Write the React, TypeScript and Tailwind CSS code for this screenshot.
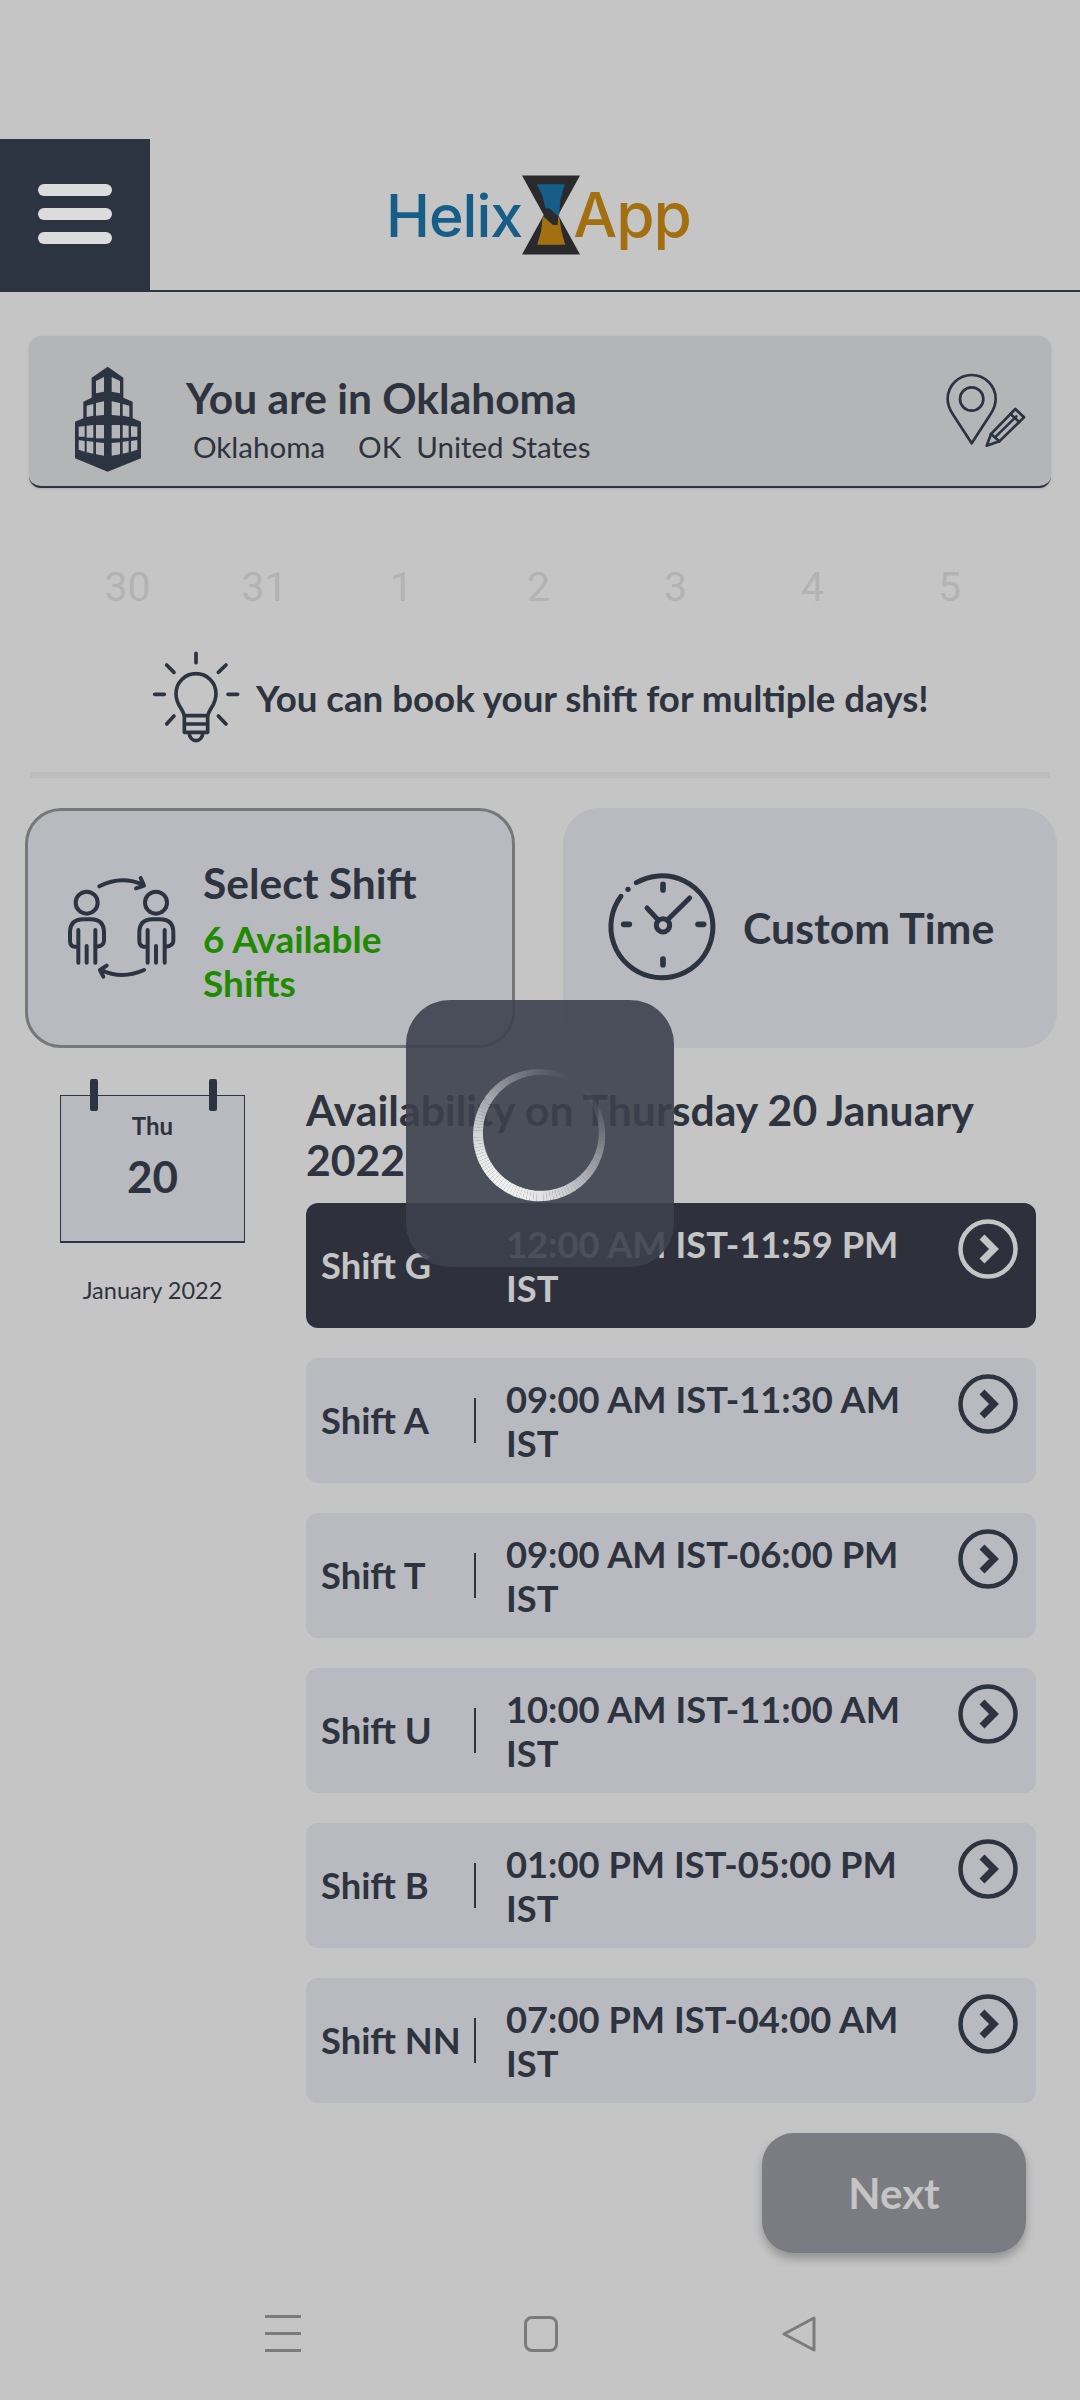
import type { ReactNode } from "react";

const SHIFTS = [
  { name: "Shift G", from: "12:00 AM IST-11:59 PM", active: true },
  { name: "Shift A", from: "09:00 AM IST-11:30 AM" },
  { name: "Shift T", from: "09:00 AM IST-06:00 PM" },
  { name: "Shift U", from: "10:00 AM IST-11:00 AM" },
  { name: "Shift B", from: "01:00 PM IST-05:00 PM" },
  { name: "Shift NN", from: "07:00 PM IST-04:00 AM" },
];

const DAYS = ["30", "31", "1", "2", "3", "4", "5"];

function Hourglass() {
  return (
    <svg width="58" height="80" viewBox="0 0 176 240" className="shrink-0">
      <polygon points="0,0 176,0 110,120 176,240 0,240 66,120" fill="#2a2a2c" />
      <polygon points="45,27 130,27 116,75 113,120 76,120 63,65" fill="#165d88" />
      <polygon points="63,125 113,125 120,170 131,210 46,210 58,170" fill="#a37011" />
      <polygon points="70,100 84,100 110,125 108,150 94,150 66,125" fill="#2a2a2c" />
    </svg>
  );
}

function Building() {
  const win = "#b4b5b7";
  return (
    <svg width="100" height="125" viewBox="0 0 300 375" className="shrink-0">
      <polygon
        points="143,35 190,68 190,128 218,140 218,190 243,200 243,310 143,350 45,310 45,200 70,190 70,140 95,128 95,68"
        fill="#2c3341"
      />
      <g fill={win}>
        <polygon points="108,78 132,66 132,110 108,115" />
        <polygon points="155,66 180,78 180,115 155,110" />
        <polygon points="80,152 100,147 100,182 80,186" />
        <polygon points="108,144 132,139 132,180 108,182" />
        <polygon points="155,139 180,144 180,182 155,180" />
        <polygon points="188,147 208,152 208,186 188,182" />
        <polygon points="56,215 74,213 74,245 56,245" />
        <polygon points="80,212 100,210 100,248 80,248" />
        <polygon points="108,210 132,210 132,250 108,250" />
        <polygon points="155,210 180,210 180,250 155,250" />
        <polygon points="188,210 206,212 206,248 188,248" />
        <polygon points="213,213 232,215 232,245 213,245" />
        <polygon points="56,255 74,258 74,290 56,284" />
        <polygon points="80,258 100,260 100,296 80,292" />
        <polygon points="108,262 132,264 132,302 108,298" />
        <polygon points="155,264 180,262 180,298 155,302" />
        <polygon points="188,260 206,258 206,292 188,296" />
        <polygon points="213,258 232,255 232,284 213,290" />
      </g>
    </svg>
  );
}

function PinEdit() {
  return (
    <svg width="110" height="95" viewBox="0 0 330 285" fill="none" stroke="#2c3341" strokeWidth="8" strokeLinejoin="round" strokeLinecap="round" className="shrink-0">
      <path d="M122 238 L65 150 C52 130 50 118 50 105 A72 72 0 0 1 194 105 C194 118 192 130 179 150 Z" />
      <circle cx="122" cy="105" r="35" />
      <path d="M167 245 L180 210 L253 135 L279 160 L205 232 Z" />
      <path d="M238 150 L265 174 M180 210 L205 232 M192 220 L256 157" />
    </svg>
  );
}

function Bulb() {
  return (
    <svg width="110" height="105" viewBox="0 0 330 315" fill="none" stroke="#2c3341" strokeWidth="11" strokeLinecap="round" strokeLinejoin="round" className="shrink-0">
      <path d="M168 25 V53 M80 60 L102 82 M258 60 L235 82 M44 148 H73 M264 148 H293 M80 237 L102 213 M258 237 L235 213" />
      <path d="M133 212 C127 188 108 180 108 146 A60 60 0 0 1 228 146 C228 180 209 188 203 212 Z" />
      <path d="M133 212 V262 H203 V212 M133 237 H203 M147 262 C150 295 186 295 189 262" />
    </svg>
  );
}

function People() {
  const person = (
    <>
      <circle cx="140" cy="248" r="33" />
      <path d="M112 380 H103 Q90 378 90 362 V338 Q90 298 130 298 H152 Q192 298 192 338 V362 Q192 378 168 380" />
      <path d="M115 330 V428 M140 378 V428 M166 330 V428" />
    </>
  );
  return (
    <svg width="200" height="180" viewBox="0 0 600 540" fill="none" stroke="#2c3341" strokeWidth="12" strokeLinecap="round" strokeLinejoin="round" className="shrink-0">
      {person}
      <g transform="translate(208 0)">{person}</g>
      <path d="M178 199 Q245 165 310 195 M302 174 L312 197 L288 205" />
      <path d="M312 450 Q245 480 183 450 M200 437 L180 450 L190 470" />
    </svg>
  );
}

function Clock() {
  return (
    <svg width="130" height="125" viewBox="0 0 390 375" fill="none" stroke="#2c3341" strokeWidth="15" strokeLinecap="round" className="shrink-0">
      <path d="M118 62 A153 153 0 1 1 72 103" />
      <path d="M198 67 V84 M198 291 V308 M80 187 H97 M303 187 H320" strokeWidth="17" />
      <path d="M150 138 L180 170 M278 108 L215 170" />
      <circle cx="198" cy="190" r="20" />
      <circle cx="93" cy="82" r="8" fill="#2c3341" stroke="none" />
    </svg>
  );
}

function CircleArrow({ color }: { color: string }) {
  return (
    <svg width="60" height="60" viewBox="0 0 60 60" fill="none" stroke={color} className="shrink-0">
      <circle cx="30" cy="30" r="27.5" strokeWidth="4.5" />
      <path d="M24 18 L36 30 L24 42" strokeWidth="7" />
    </svg>
  );
}

function Ring() {
  const arcs: ReactNode[] = [];
  const cx = 70;
  const cy = 70;
  const r = 62;
  const total = 120;
  for (let i = 0; i < total; i++) {
    const a0 = (i / total) * Math.PI * 2;
    const a1 = ((i + 1) / total) * Math.PI * 2;
    const o = Math.pow((1 + Math.cos(a0 - (215 * Math.PI) / 180)) / 2, 0.9);
    arcs.push(
      <path
        key={i}
        d={`M${cx + r * Math.sin(a0)} ${cy - r * Math.cos(a0)} A${r} ${r} 0 0 1 ${cx + r * Math.sin(a1)} ${cy - r * Math.cos(a1)}`}
        stroke="#f2f2f2"
        strokeOpacity={o}
        strokeWidth={5 + o * 6}
        fill="none"
      />,
    );
  }
  return (
    <svg width="140" height="140" viewBox="0 0 140 140" className="blur-[0.7px]">
      {arcs}
    </svg>
  );
}

export default function App() {
  return (
    <div className="relative h-[2400px] w-[1080px] overflow-hidden bg-[#c5c5c5] pt-[140px] font-['Lato',sans-serif] text-[#2e3340]">
      {/* header */}
      <header className="flex h-[152px] items-center border-b-[2px] border-[#2e3340]">
        <div className="flex h-[152px] w-[150px] shrink-0 flex-col items-center gap-[12px] bg-[#2c3341] pt-[45px]">
          <span className="h-[12px] w-[74px] rounded-full bg-[#dcdcdc]" />
          <span className="h-[12px] w-[74px] rounded-full bg-[#dcdcdc]" />
          <span className="h-[12px] w-[74px] rounded-full bg-[#dcdcdc]" />
        </div>
        <div className="ml-[236px] flex items-center font-['Inter',sans-serif] leading-none font-medium tracking-[-1px]">
          <span className="text-[59px] text-[#165d88]">Helix</span>
          <Hourglass />
          <span className="-ml-[7px] text-[62px] text-[#a37011]">App</span>
        </div>
      </header>

      {/* location */}
      <section className="mx-[29px] mt-[44px] flex h-[152px] items-center rounded-[12px] border-b-[2px] border-[#2e3340] bg-[#b4b5b7] shadow-sm">
        <div className="ml-[31px] mt-[12px]">
          <Building />
        </div>
        <div className="ml-[26px] flex-1 pt-[15px]">
          <h2 className="text-[42.5px] leading-[50px] font-bold">You are in Oklahoma</h2>
          <p className="mt-[6px] ml-[7px] flex text-[29.5px] leading-[36px] font-normal whitespace-nowrap">
            <span>Oklahoma</span>
            <span className="ml-[33px]">OK</span>
            <span className="ml-[15px]">United States</span>
          </p>
        </div>
        <div className="mr-[10px]">
          <PinEdit />
        </div>
      </section>

      {/* dates */}
      <div className="ml-[59px] mt-[69px] grid h-[54px] w-[959px] grid-cols-7 items-center text-center font-[Roboto,sans-serif] text-[41px] text-[#b3b3b3]">
        {DAYS.map((d) => (
          <span key={d}>{d}</span>
        ))}
      </div>

      {/* tip */}
      <div className="ml-[140px] mt-[34px] flex h-[105px] items-center gap-[6px]">
        <Bulb />
        <p className="pt-[2px] text-[36.7px] font-bold whitespace-nowrap">You can book your shift for multiple days!</p>
      </div>
      <div className="mx-[30px] mt-[22px] h-[6px] bg-[#bdbdbd]" />

      {/* mode cards */}
      <div className="ml-[25px] mt-[30px] flex gap-[48px]">
        <div className="flex h-[240px] w-[490px] items-center rounded-[36px] border-[3px] border-[#767779] bg-[#b9bac0]">
          <div className="ml-[12px] -mt-[36px]">
            <People />
          </div>
          <div className="-ml-[37px] mt-[8px]">
            <p className="text-[42.5px] leading-[48px] font-bold">Select Shift</p>
            <p className="mt-[10px] w-[240px] text-[37px] leading-[44px] font-bold text-[#1f8a00]">6 Available Shifts</p>
          </div>
        </div>
        <div className="flex h-[240px] w-[494px] items-center rounded-[36px] bg-[#b9bac0]">
          <div className="ml-[34px] mt-[-7px]">
            <Clock />
          </div>
          <p className="ml-[16px] text-[42.8px] font-bold whitespace-nowrap">Custom Time</p>
        </div>
      </div>

      {/* availability */}
      <section className="mt-[37px] flex">
        <div className="ml-[60px] w-[185px] pt-[10px]">
          <div className="relative flex h-[148px] flex-col items-center border border-b-[2px] border-[#2e3340] bg-[#b9bac0]">
            <span className="absolute -top-[17px] left-[29px] h-[32px] w-[8px] rounded-[2px] bg-[#2c3341]" />
            <span className="absolute -top-[17px] left-[148px] h-[32px] w-[8px] rounded-[2px] bg-[#2c3341]" />
            <p className="mt-[15px] text-[24px] leading-[30px] font-bold">Thu</p>
            <p className="mt-[8px] text-[44px] leading-[54px] font-bold">20</p>
          </div>
          <p className="mt-[32px] text-center text-[23.5px] leading-[30px] font-normal whitespace-nowrap">January 2022</p>
        </div>
        <div className="ml-[61px] w-[730px]">
          <h3 className="text-[42.7px] leading-[50px] font-bold">Availability on Thursday 20 January 2022</h3>
          <div className="mt-[18px] flex flex-col gap-[30px]">
            {SHIFTS.map((s) => (
              <div
                key={s.name}
                className={
                  s.active
                    ? "flex h-[125px] items-center rounded-[12px] bg-[#2e313c] pl-[15px] text-[#c5c5c5]"
                    : "flex h-[125px] items-center rounded-[12px] bg-[#b9bac0] pl-[15px]"
                }
              >
                <span className="w-[153px] shrink-0 text-[36.3px] font-bold whitespace-nowrap">{s.name}</span>
                <span className={s.active ? "h-[45px] w-[2px] shrink-0 bg-[#2e313c]" : "h-[45px] w-[2px] shrink-0 bg-[#2e3340]"} />
                <p className="ml-[30px] w-[420px] shrink-0 text-[36.3px] leading-[44px] font-bold">
                  {s.from} IST
                </p>
                <div className="mb-[33px] ml-[32px]">
                  <CircleArrow color={s.active ? "#c5c5c5" : "#2e3340"} />
                </div>
              </div>
            ))}
          </div>
        </div>
      </section>

      {/* next */}
      <div className="mr-[54px] mt-[30px] flex justify-end">
        <button className="flex h-[120px] w-[264px] items-center justify-center rounded-[32px] bg-[#7b7c81] text-[42px] font-bold text-[#c5c5c5] shadow-[0_6px_10px_rgba(0,0,0,0.25)]">
          Next
        </button>
      </div>

      {/* system nav */}
      <nav className="mt-[62px] flex items-center justify-center gap-[223px]">
        <div className="flex w-[36px] flex-col gap-[14px]">
          <span className="h-[3px] bg-[#7b7b7b]" />
          <span className="h-[3px] bg-[#7b7b7b]" />
          <span className="h-[3px] bg-[#7b7b7b]" />
        </div>
        <div className="h-[36px] w-[34px] rounded-[8px] border-[3px] border-[#7b7b7b]" />
        <svg width="35" height="36" viewBox="0 0 35 36" fill="none" stroke="#7b7b7b" strokeWidth="3" strokeLinejoin="round">
          <path d="M33 2 L3 18 L33 34 Z" />
        </svg>
      </nav>

      {/* loading overlay */}
      <div className="absolute left-[406px] top-[1000px] flex h-[267px] w-[268px] items-center justify-center rounded-[44px] bg-[rgba(60,65,77,0.894)]">
        <Ring />
      </div>
    </div>
  );
}
